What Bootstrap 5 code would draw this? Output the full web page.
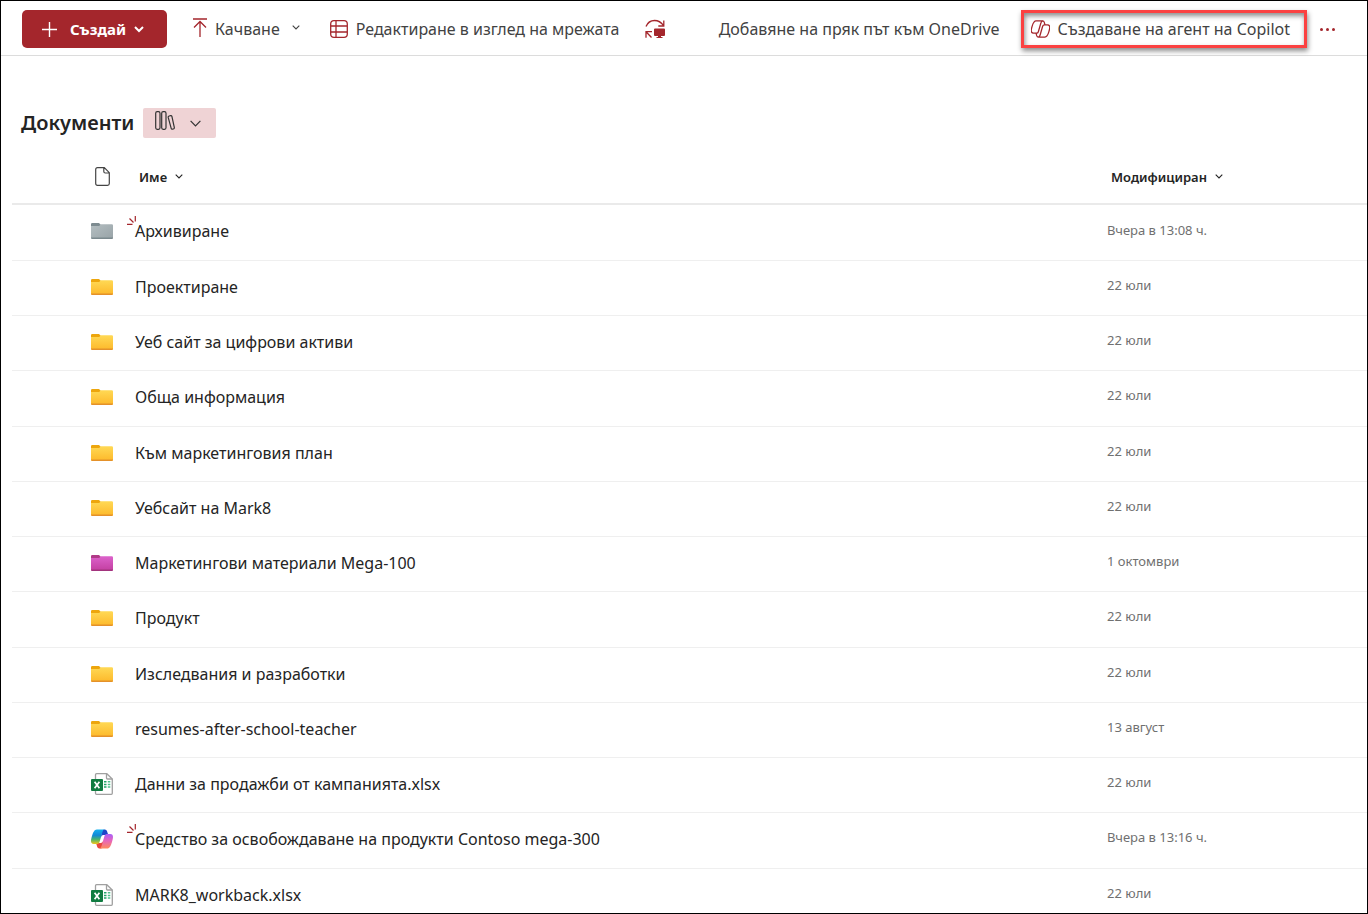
<!DOCTYPE html>
<html lang="bg">
<head>
<meta charset="utf-8">
<meta name="viewport" content="width=device-width, initial-scale=1">
<title>Документи</title>
<link href="https://cdn.jsdelivr.net/npm/bootstrap@5.3.0/dist/css/bootstrap.min.css" rel="stylesheet">
<style>
  body { font-family: "Noto Sans", "Open Sans", sans-serif; color: #242424; }
  .app-frame { border: 1px solid #000; }
  svg { display: block; flex: none; }
  .command-bar { height: 55px; border-bottom: 1px solid #dcdcdc; padding: 2px 32px 0 21px; }
  .cmd { color: #424242; font-size: 16px; line-height: 24px; padding: 0; border: 0; border-radius: 0; }
  .cmd svg, .more { color: #a4262c; }
  .cmd .chev { color: #424242; }
  .cmd-group { gap: 26px; }
  .btn-create { background: #a4262c; color: #fff; font-size: 15px; font-weight: 700; height: 38px; width: 145px; border: 0; border-radius: 5px; padding: 0 23px 0 20px; }
  .btn-create:hover { background: #8e1f25; color: #fff; }
  .copilot-cmd { height: 38px; border: 3px solid #fb4141; padding: 0 14px 0 7px; margin-left: 21px; margin-right: 13px; box-shadow: 1px 3px 5px rgba(0,0,0,.45), inset 1px 3px 5px rgba(0,0,0,.45); }
  .library-head { padding: 52px 20px 0; gap: 9px; }
  .library-title { font-size: 20px; font-weight: 600; line-height: 30px; }
  .view-switch { background: #efd3d5; width: 73px; height: 30px; border: 0; border-radius: 2px; padding: 0 15px 0 12px; color: #333; }
  .file-area { padding: 12px 0 0 11px; }
  .files { table-layout: fixed; --bs-table-bg: transparent; }
  .files th { height: 54px; padding: 0; vertical-align: middle; border-bottom: 2px solid #eaeaea; }
  .files td { height: 55px; padding: 0 0 2px; border-bottom: 1px solid #efefef; }
  .files tr:nth-child(4n) td, .files tr:first-child td { height: 56px; }
  .files .col-icon { width: 123px; padding-left: 79px; }
  .files .col-date { width: 260px; }
  .files td.col-date { font-size: 13px; color: #707070; padding-bottom: 4px; }
  .files a { color: #242424; font-size: 16px; text-decoration: none; }
  .files a:hover { text-decoration: underline; }
  .sort { font-size: 13px; font-weight: 600; line-height: 20px; border: 0; padding: 0 0 0 4px; color: #242424; }
  .new-mark { position: absolute; left: -8px; top: -4px; color: #a4262c; }
</style>
</head>
<body>
<svg width="0" height="0" class="position-absolute" aria-hidden="true">
  <defs>
    <linearGradient id="gYellow" x1="0" y1="0" x2="0" y2="1"><stop offset="0" stop-color="#ffd955"/><stop offset="1" stop-color="#fdb82a"/></linearGradient>
    <linearGradient id="gGray" x1="0" y1="0" x2="1" y2="1"><stop offset="0" stop-color="#b4bec1"/><stop offset="1" stop-color="#98a3a7"/></linearGradient>
    <linearGradient id="gPink" x1="0" y1="0" x2="0" y2="1"><stop offset="0" stop-color="#dc62cb"/><stop offset="1" stop-color="#c23e9f"/></linearGradient>
    <linearGradient id="gCopA" x1="0" y1="0" x2="0" y2="1"><stop offset="0" stop-color="#14b0ee"/><stop offset=".4" stop-color="#0f88d8"/><stop offset=".68" stop-color="#47b46e"/><stop offset="1" stop-color="#f2c51c"/></linearGradient>
    <linearGradient id="gCopB" x1="0" y1="0" x2="0" y2="1"><stop offset="0" stop-color="#a860f8"/><stop offset=".45" stop-color="#e665bd"/><stop offset="1" stop-color="#ff8a5c"/></linearGradient>
    <symbol id="folder-yellow" viewBox="0 0 22 16"><path d="M0 2V1.200Q0 0 1.200 0H8l1.800 1.700V5H0z" fill="#eda60d"/><path d="M0 3h8.200L9.800 1.200h11Q22 1.200 22 2.400v12.400Q22 16 20.800 16H1.200Q0 16 0 14.800z" fill="url(#gYellow)"/><path d="M0 14.600h22Q22 16 20.800 16H1.200Q0 16 0 14.600z" fill="#e4912a"/></symbol>
    <symbol id="folder-gray" viewBox="0 0 22 16"><path d="M0 2V1.200Q0 0 1.200 0H8l1.800 1.700V5H0z" fill="#7d8b90"/><path d="M0 3h8.200L9.800 1.200h11Q22 1.200 22 2.400v12.400Q22 16 20.800 16H1.200Q0 16 0 14.800z" fill="url(#gGray)"/><path d="M0 14.600h22Q22 16 20.800 16H1.200Q0 16 0 14.600z" fill="#7b898e"/></symbol>
    <symbol id="folder-pink" viewBox="0 0 22 16"><path d="M0 2V1.200Q0 0 1.200 0H8l1.800 1.700V5H0z" fill="#b03a87"/><path d="M0 3h8.200L9.800 1.200h11Q22 1.200 22 2.400v12.400Q22 16 20.800 16H1.200Q0 16 0 14.800z" fill="url(#gPink)"/><path d="M0 14.600h22Q22 16 20.800 16H1.200Q0 16 0 14.600z" fill="#a2347d"/></symbol>
    <symbol id="excel" viewBox="0 0 22 22"><path d="M5.500.700h10.300l5.500 5.300v14.300q0 1-1 1H5.500q-1 0-1-1V1.700q0-1 1-1z" fill="#fff" stroke="#a0a0a0" stroke-width="1.300"/><path d="M15.500.700V5q0 1 1 1h4.800" fill="none" stroke="#a0a0a0" stroke-width="1.300"/><path d="M13 8.700h2.500M13 11.400h2.500M13 14.100h2.500" stroke="#21a366" stroke-width="1.500"/><path d="M16.800 8.700h2.500M16.800 11.400h2.500M16.800 14.100h2.500" stroke="#4cc08a" stroke-width="1.500"/><rect y="6" width="12" height="12" rx="1" fill="#107c41"/><path d="M3.600 8.700l4.800 6.600M8.400 8.700l-4.800 6.600" stroke="#fff" stroke-width="1.700"/></symbol>
    <symbol id="agent" viewBox="2 4 44 40">
      <path d="M34.100 8.300A4.600 4.600 0 0 0 29.700 5h-1.400a4.600 4.600 0 0 0-4.500 3.800L21.500 21.400l.6-2a4.600 4.600 0 0 1 4.400-3.300h7.900l3.300 1.300 3.100-1.300h-.9a4.600 4.600 0 0 1-4.400-3.300z" fill="#1d46c8"/>
      <path d="M14.300 39.700A4.600 4.600 0 0 0 18.800 43h2.900a4.600 4.600 0 0 0 4.600-4.500l.3-12.200-.6 2.300a4.600 4.600 0 0 1-4.500 3.300h-7.900l-2.800-1.500-3.100 1.500h.9a4.600 4.600 0 0 1 4.500 3.300z" fill="#e8483f"/>
      <path d="M29.500 5h-16C8.900 5 6.100 11.100 4.300 17.100c-2.200 7.200-5 16.800 3.200 16.800h6.900a4.600 4.600 0 0 0 4.500-3.400L24.900 9.800Q26 5 29.500 5z" fill="url(#gCopA)"/>
      <path d="M18.500 43h16c4.600 0 7.400-6.100 9.200-12.100 2.200-7.200 5-16.800-3.200-16.800h-6.900a4.600 4.600 0 0 0-4.500 3.400L23.100 38.200Q22 43 18.500 43z" fill="url(#gCopB)"/>
    </symbol>
    <symbol id="chevron" viewBox="0 0 8 5"><path d="M.700.700L4 4 7.300.700" fill="none" stroke="currentColor" stroke-width="1.100"/></symbol>
    <symbol id="new-spark" viewBox="0 0 9 9"><path d="M0 8.300h5.500M2.500 2.500l4 4M8.300 0v5.500" fill="none" stroke="currentColor" stroke-width="1.200"/></symbol>
  </defs>
</svg>

<div class="app-frame vh-100 overflow-hidden bg-white">
  <nav class="command-bar d-flex align-items-center justify-content-between text-nowrap" aria-label="Команди">
    <div class="cmd-group d-flex align-items-center">
      <button type="button" class="btn btn-create d-flex align-items-center">
        <svg width="15" height="15" viewBox="0 0 15 15"><path d="M7.500 0v15M0 7.500h15" stroke="currentColor" stroke-width="1.400"/></svg>
        <span class="ms-auto me-2">Създай</span>
        <svg width="10" height="7" viewBox="0 0 10 7"><path d="M1 1l4 4 4-4" fill="none" stroke="currentColor" stroke-width="2"/></svg>
      </button>
      <button type="button" class="btn cmd d-flex align-items-center">
        <svg class="mb-1" width="14" height="19" viewBox="0 0 14 19"><path d="M0 1h14M7 19V4M1 9.500L7 3.500l6 6" fill="none" stroke="currentColor" stroke-width="1.300"/></svg>
        <span class="ms-2 me-2">Качване</span>
        <svg class="chev ms-1 me-1 mb-1" width="8" height="5"><use href="#chevron"/></svg>
      </button>
      <button type="button" class="btn cmd d-flex align-items-center">
        <svg width="18" height="18" viewBox="0 0 18 18"><path d="M4 .700h10q3.300 0 3.300 3.300v10q0 3.300-3.300 3.300H4Q.700 17.300.700 14V4Q.700.700 4 .700zM6 .700v16.600M.700 6h16.600M.700 12h16.600" fill="none" stroke="currentColor" stroke-width="1.300"/></svg>
        <span class="ms-2">Редактиране в изглед на мрежата</span>
      </button>
      <button type="button" class="btn cmd" aria-label="Синхронизиране">
        <svg width="20" height="20" viewBox="0 0 20 20"><path d="M1 7.500Q3.500 1.500 9.500 1.500 15 1.500 18.500 6.500M18.800 1.500v5.500h-5.500M1 18.800V12.700h6M1.500 13.200l5 5.300" fill="none" stroke="currentColor" stroke-width="1.300"/><path d="M9 10.500q0-1 1-1h9q1 0 1 1V16q0 1-1 1h-3v1h1.500v1h-6v-1H13v-1h-3q-1 0-1-1z" fill="currentColor"/></svg>
      </button>
    </div>
    <div class="d-flex align-items-center">
      <button type="button" class="btn cmd">Добавяне на пряк път към OneDrive</button>
      <button type="button" class="btn cmd copilot-cmd d-flex align-items-center">
        <svg width="19" height="18" viewBox="1.500 3.500 45 41"><path d="M34.500 14 33 8.300Q32 5 29 5H13.500C8.900 5 6.100 11.100 4.300 17.100c-2.200 7.200-5 16.800 3.200 16.800h6.900a4.600 4.600 0 0 0 4.500-3.400L24.900 9.800Q26 5 29.500 5M13.500 34l1.500 5.700Q16 43 19 43h15.500c4.600 0 7.400-6.100 9.200-12.100 2.200-7.200 5-16.800-3.200-16.800h-6.900a4.600 4.600 0 0 0-4.500 3.400L23.100 38.200Q22 43 18.500 43" fill="none" stroke="currentColor" stroke-width="3"/></svg>
        <span class="ms-2">Създаване на агент на Copilot</span>
      </button>
      <button type="button" class="btn cmd more" aria-label="Още">
        <svg width="15" height="3" viewBox="0 0 15 3" fill="currentColor"><circle cx="1.500" cy="1.500" r="1.500"/><circle cx="7.500" cy="1.500" r="1.500"/><circle cx="13.500" cy="1.500" r="1.500"/></svg>
      </button>
    </div>
  </nav>

  <header class="library-head d-flex align-items-center">
    <h1 class="library-title m-0">Документи</h1>
    <button type="button" class="btn view-switch d-flex align-items-center justify-content-between" aria-label="Изглед на библиотеката">
      <svg class="mb-1" width="20" height="20" viewBox="0 0 20 20"><g fill="none" stroke="currentColor" stroke-width="1.200"><rect x=".700" y=".700" width="4.300" height="17.600" rx="1.500"/><rect x="6.700" y=".700" width="4.300" height="17.600" rx="1.500"/><path d="M14.200 5l1.500-.400q1-.200 1.200.800l2.400 11q.200 1.300-.900 1.600l-1 .200q-1 .200-1.200-.800L13.200 6.400q-.200-1.100 1-1.400z"/></g></svg>
      <svg width="11" height="7" viewBox="0 0 11 7"><path d="M.600.800l4.900 5 4.900-5" fill="none" stroke="currentColor" stroke-width="1.200"/></svg>
    </button>
  </header>

  <main class="file-area">
    <table class="table files align-middle mb-0">
      <thead>
        <tr>
          <th class="col-icon" scope="col" aria-label="Тип"><svg class="ms-1" width="15" height="19" viewBox="0 0 15 19"><path d="M2.500.700h6.800l5 5v10.800q0 1.800-1.800 1.800h-10Q.700 18.300.700 16.500v-14Q.700.700 2.500.700zM8.800.700v3.800q0 1.500 1.500 1.500h4" fill="none" stroke="#444" stroke-width="1.200"/></svg></th>
          <th scope="col"><button type="button" class="btn sort d-flex align-items-center gap-2">Име <svg width="8" height="5"><use href="#chevron"/></svg></button></th>
          <th class="col-date" scope="col"><button type="button" class="btn sort d-flex align-items-center gap-2">Модифициран <svg width="8" height="5"><use href="#chevron"/></svg></button></th>
        </tr>
      </thead>
      <tbody id="rows"></tbody>
    </table>
  </main>
</div>
<script src="https://cdn.jsdelivr.net/npm/bootstrap@5.3.0/dist/js/bootstrap.bundle.min.js"></script>
<script>
  const files = [
    ["folder-gray", "Архивиране", "Вчера в 13:08 ч.", true],
    ["folder-yellow", "Проектиране", "22 юли"],
    ["folder-yellow", "Уеб сайт за цифрови активи", "22 юли"],
    ["folder-yellow", "Обща информация", "22 юли"],
    ["folder-yellow", "Към маркетинговия план", "22 юли"],
    ["folder-yellow", "Уебсайт на Mark8", "22 юли"],
    ["folder-pink", "Маркетингови материали Mega-100", "1 октомври"],
    ["folder-yellow", "Продукт", "22 юли"],
    ["folder-yellow", "Изследвания и разработки", "22 юли"],
    ["folder-yellow", "resumes-after-school-teacher", "13 август"],
    ["excel", "Данни за продажби от кампанията.xlsx", "22 юли"],
    ["agent", "Средство за освобождаване на продукти Contoso mega-300", "Вчера в 13:16 ч.", true],
    ["excel", "MARK8_workback.xlsx", "22 юли"]
  ];
  const heights = { excel: 22, agent: 20 };
  document.getElementById("rows").innerHTML = files.map(([icon, name, date, isNew]) => `
    <tr>
      <td class="col-icon"><svg width="22" height="${heights[icon] || 16}"><use href="#${icon}"/></svg></td>
      <td><a href="#" class="position-relative">${isNew ? '<svg class="new-mark" width="9" height="9"><use href="#new-spark"/></svg>' : ''}${name}</a></td>
      <td class="col-date">${date}</td>
    </tr>`).join("");
</script>
</body>
</html>
